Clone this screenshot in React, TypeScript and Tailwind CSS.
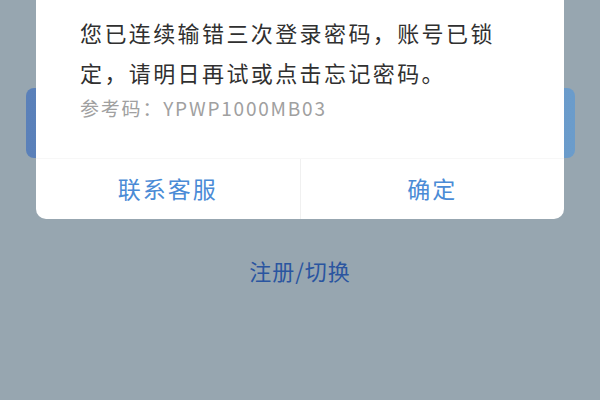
import React from "react";

const font = {
  fontFamily: '"Noto Sans CJK SC", "Noto Sans", "Liberation Sans", sans-serif',
};

export default function App() {
  return (
    <div
      className="relative w-[600px] h-[400px] overflow-hidden bg-[#97a6b0]"
      style={font}
    >
      {/* page behind the overlay */}
      <div className="flex flex-col items-center pt-[88px]">
        <div className="w-[549px] h-[70px] rounded-[8px] bg-gradient-to-r from-[#5a80b9] to-[#6b9ccb]" />
        <div className="mt-[97px] text-[22px] leading-[30px] tracking-[1px] text-[#2a55a0]">
          注册/切换
        </div>
      </div>

      {/* alert dialog */}
      <div className="absolute left-[36px] top-[-20px] w-[528px] rounded-[10px] bg-white flex flex-col">
        <div className="pl-[44px] pr-[30px] pt-[32px]">
          <p className="text-[22px] leading-[40px] tracking-[2.4px] text-[#303030]">
            您已连续输错三次登录密码，账号已锁定，请明日再试或点击忘记密码。
          </p>
          <p className="mt-[4px] text-[19px] leading-[24px] tracking-[1.8px] text-[#a0a0a0]">
            参考码：YPWP1000MB03
          </p>
        </div>
        <div className="mt-[38px] h-[61px] flex border-t border-[#f7f7f7]">
          <button className="flex-1 flex items-center justify-center pb-[2px] text-[23px] tracking-[2px] text-[#4a8bd6]">
            联系客服
          </button>
          <div className="w-px bg-[#f0f0f0]" />
          <button className="flex-1 flex items-center justify-center pb-[2px] text-[23px] tracking-[2px] text-[#4a8bd6]">
            确定
          </button>
        </div>
      </div>
    </div>
  );
}
